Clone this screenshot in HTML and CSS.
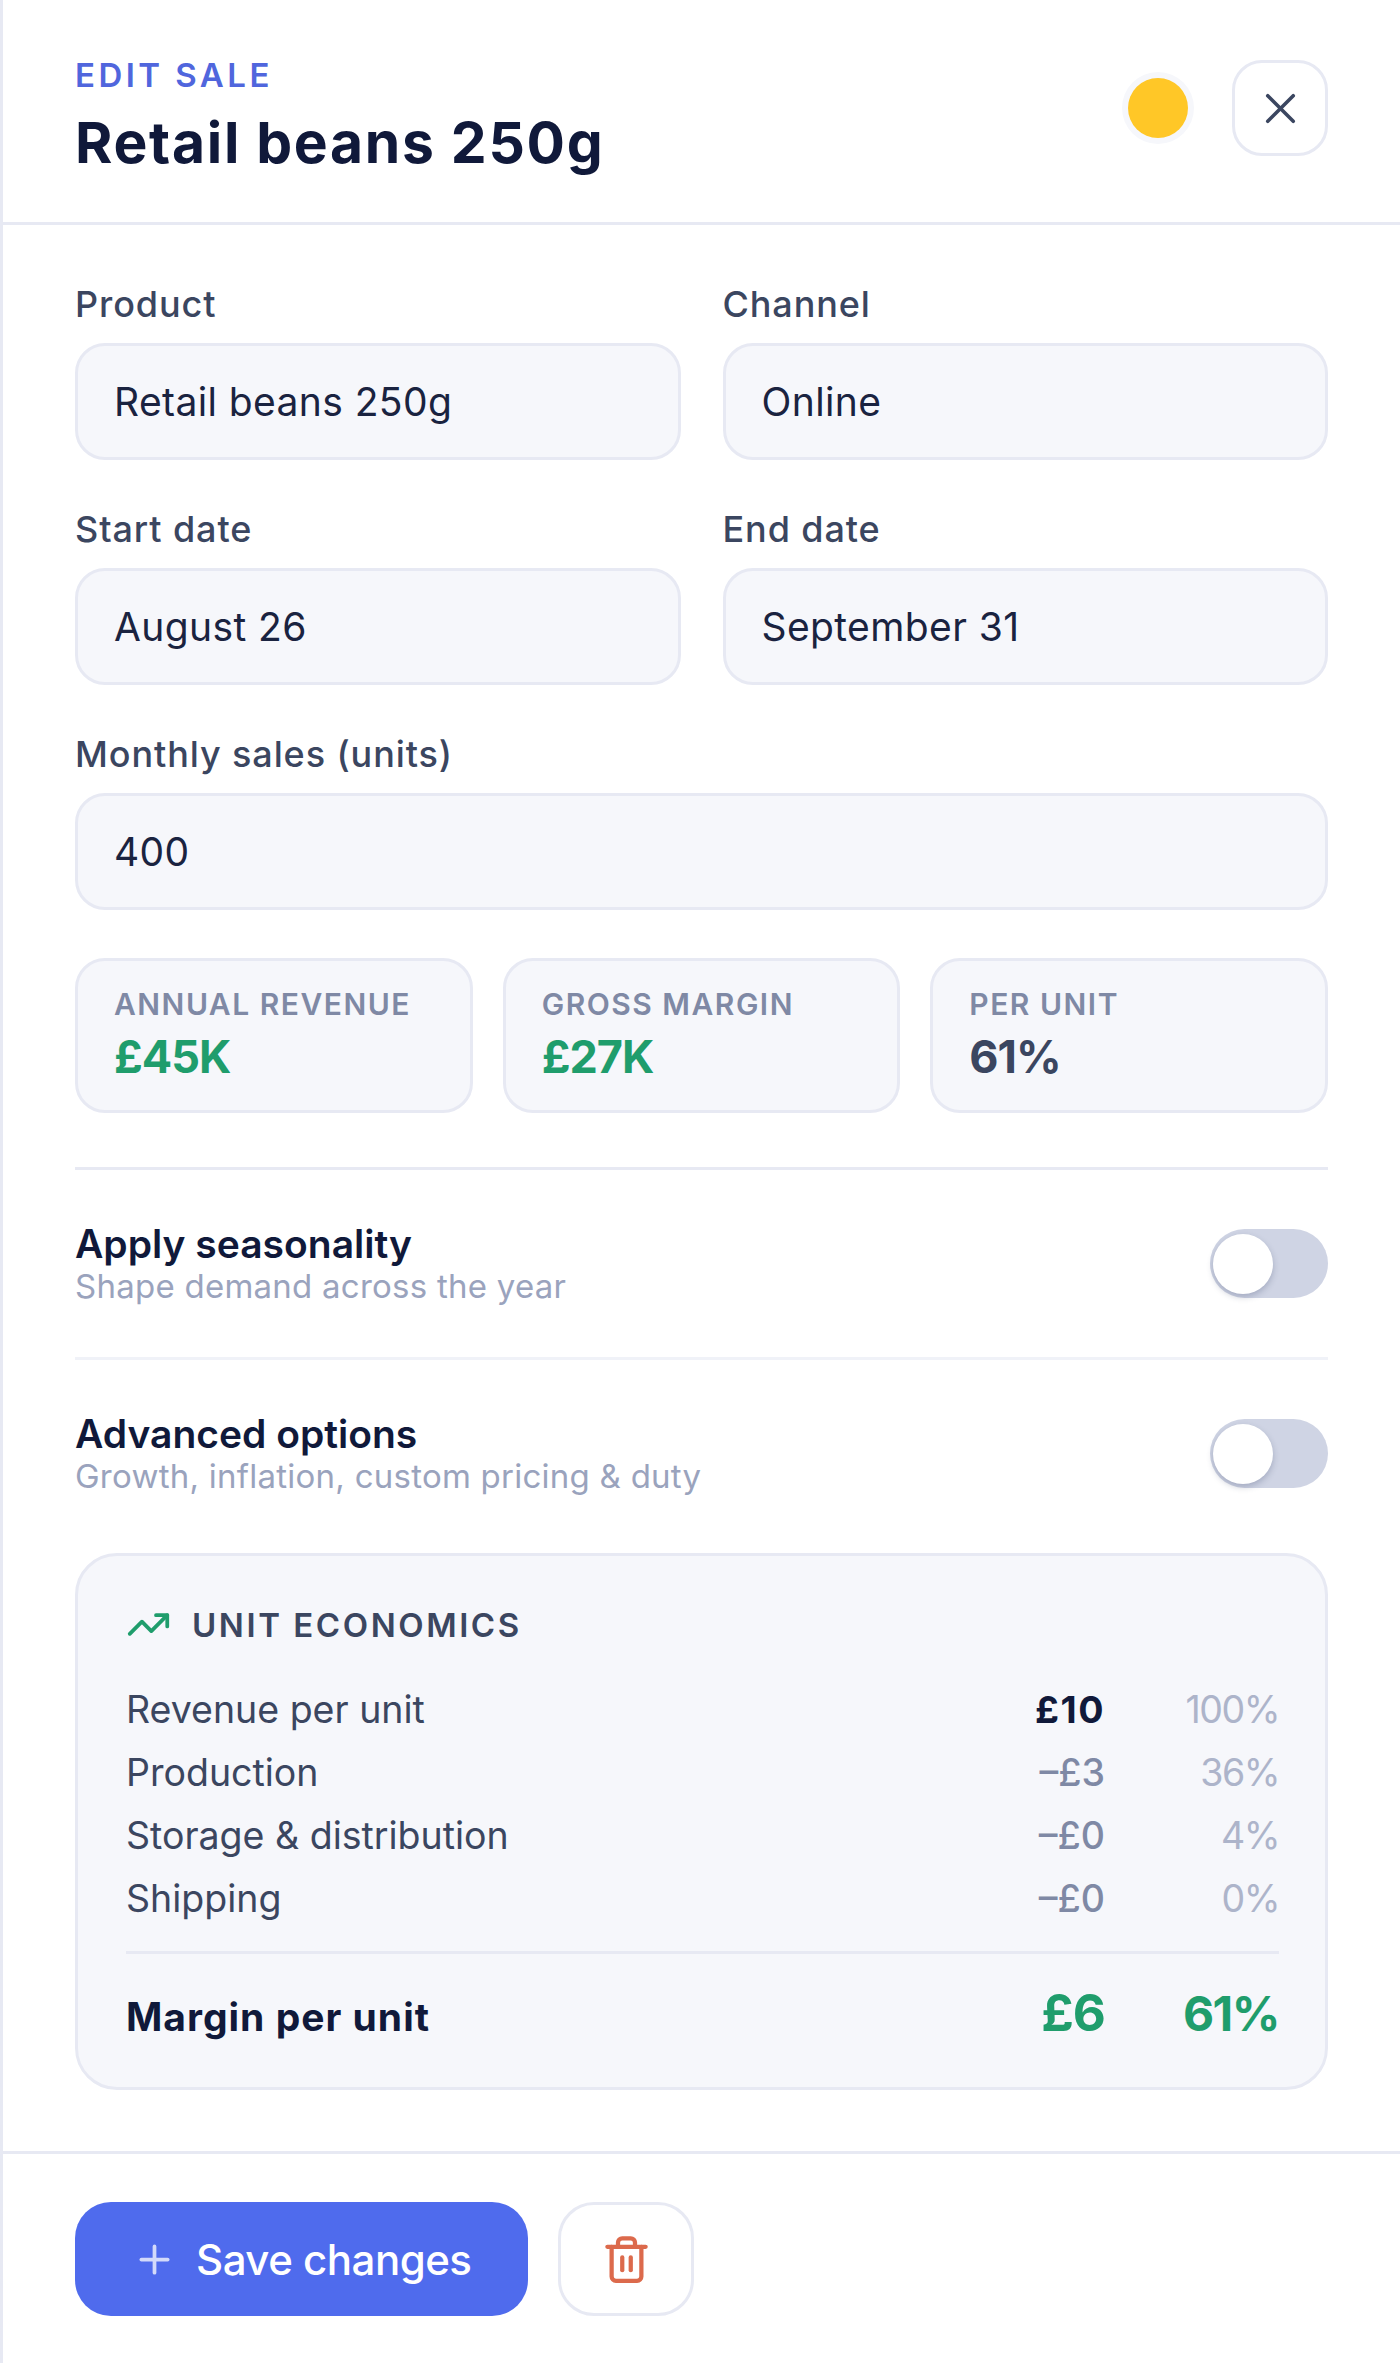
FILE: index.html
```html
<!DOCTYPE html>
<html lang="en">
<head>
    <meta charset="UTF-8">
    <meta name="viewport" content="width=device-width, initial-scale=1.0">
    <title>Edit sale</title>
    <link rel="stylesheet" href="styles.css">
</head>
<body>
    <div class="panel">
        <header class="panel-header">
            <div>
                <div class="eyebrow">EDIT SALE</div>
                <h1 class="title">Retail beans 250g</h1>
            </div>
            <div class="header-actions">
                <span class="colour-dot"></span>
                <button class="icon-button close-button" type="button" aria-label="Close">
                    <svg width="51" height="51" viewBox="0 0 24 24" fill="none" stroke="currentColor" stroke-width="1.7" stroke-linecap="round" stroke-linejoin="round"><path d="M18 6 6 18"/><path d="m6 6 12 12"/></svg>
                </button>
            </div>
        </header>

        <div class="panel-body">
            <div class="field-grid">
                <div class="field">
                    <div class="field-label">Product</div>
                    <div class="field-value">Retail beans 250g</div>
                </div>
                <div class="field">
                    <div class="field-label">Channel</div>
                    <div class="field-value">Online</div>
                </div>
                <div class="field">
                    <div class="field-label">Start date</div>
                    <div class="field-value">August 26</div>
                </div>
                <div class="field">
                    <div class="field-label">End date</div>
                    <div class="field-value">September 31</div>
                </div>
                <div class="field field-wide">
                    <div class="field-label">Monthly sales (units)</div>
                    <div class="field-value">400</div>
                </div>
            </div>

            <div class="stats">
                <div class="stat">
                    <div class="stat-label">ANNUAL REVENUE</div>
                    <div class="stat-value green">£45K</div>
                </div>
                <div class="stat">
                    <div class="stat-label">GROSS MARGIN</div>
                    <div class="stat-value green">£27K</div>
                </div>
                <div class="stat">
                    <div class="stat-label">PER UNIT</div>
                    <div class="stat-value">61%</div>
                </div>
            </div>

            <div class="toggle-row">
                <div>
                    <div class="toggle-title">Apply seasonality</div>
                    <div class="toggle-sub">Shape demand across the year</div>
                </div>
                <div class="toggle"><span class="knob"></span></div>
            </div>
            <div class="toggle-row toggle-row-light">
                <div>
                    <div class="toggle-title">Advanced options</div>
                    <div class="toggle-sub">Growth, inflation, custom pricing &amp; duty</div>
                </div>
                <div class="toggle"><span class="knob"></span></div>
            </div>

            <section class="economics">
                <div class="economics-head">
                    <svg width="45" height="45" viewBox="0 0 24 24" fill="none" stroke="#1f9d6c" stroke-width="2" stroke-linecap="round" stroke-linejoin="round"><path d="M16 7h6v6"/><path d="m22 7-8.5 8.5-5-5L2 17"/></svg>
                    <span>UNIT ECONOMICS</span>
                </div>
                <div class="eco-row">
                    <span class="eco-name">Revenue per unit</span>
                    <span class="eco-amount strong">£10</span>
                    <span class="eco-pct">100%</span>
                </div>
                <div class="eco-row">
                    <span class="eco-name">Production</span>
                    <span class="eco-amount">–£3</span>
                    <span class="eco-pct">36%</span>
                </div>
                <div class="eco-row">
                    <span class="eco-name">Storage &amp; distribution</span>
                    <span class="eco-amount">–£0</span>
                    <span class="eco-pct">4%</span>
                </div>
                <div class="eco-row">
                    <span class="eco-name">Shipping</span>
                    <span class="eco-amount">–£0</span>
                    <span class="eco-pct">0%</span>
                </div>
                <div class="eco-total">
                    <span class="eco-name">Margin per unit</span>
                    <span class="eco-amount">£6</span>
                    <span class="eco-pct">61%</span>
                </div>
            </section>
        </div>

        <footer class="panel-footer">
            <button class="save-button" type="button">
                <svg width="45" height="45" viewBox="0 0 24 24" fill="none" stroke="currentColor" stroke-width="2" stroke-linecap="round" stroke-linejoin="round"><path d="M5 12h14"/><path d="M12 5v14"/></svg>
                <span>Save changes</span>
            </button>
            <button class="icon-button delete-button" type="button" aria-label="Delete">
                <svg width="51" height="51" viewBox="0 0 24 24" fill="none" stroke="currentColor" stroke-width="2" stroke-linecap="round" stroke-linejoin="round"><path d="M3 6h18"/><path d="M19 6v14a2 2 0 0 1-2 2H7a2 2 0 0 1-2-2V6"/><path d="M8 6V4a2 2 0 0 1 2-2h4a2 2 0 0 1 2 2v2"/><path d="M10 11v6"/><path d="M14 11v6"/></svg>
            </button>
        </footer>
    </div>
</body>
</html>
```
FILE: styles.css
```css
:root {
    --line: #e7e9f3;
    --soft: #f6f7fb;
    --ink: #10193a;
    --slate: #3b4660;
    --muted: #7f89a5;
    --faint: #9aa3bd;
    --green: #1f9d6c;
}

* {
    box-sizing: border-box;
}

body {
    margin: 0;
    background: #fff;
    font-family: Inter, "Liberation Sans", sans-serif;
    font-optical-sizing: none;
    color: var(--ink);
}

.panel {
    border-left: 3px solid var(--line);
    height: 2363px;
    overflow: hidden;
}

/* Header */
.panel-header {
    display: flex;
    justify-content: space-between;
    align-items: flex-start;
    height: 225px;
    padding: 54px 72px 0;
    border-bottom: 3px solid var(--line);
}

.eyebrow {
    font-size: 33px;
    line-height: 42px;
    font-weight: 600;
    letter-spacing: 3.45px;
    color: #5066dd;
    margin-bottom: 12px;
}

.title {
    margin: 0;
    font-size: 57px;
    line-height: 69px;
    font-weight: 700;
    letter-spacing: 1.7px;
}

.header-actions {
    display: flex;
    align-items: center;
    gap: 44px;
    margin-top: 6px;
}

.colour-dot {
    width: 60px;
    height: 60px;
    border-radius: 50%;
    background: #ffc727;
    box-shadow: 0 0 0 6px var(--soft);
}

.icon-button {
    display: flex;
    align-items: center;
    justify-content: center;
    padding: 0;
    background: #fff;
    border: 3px solid var(--line);
    border-radius: 30px;
    cursor: pointer;
}

.close-button {
    width: 96px;
    height: 96px;
    color: var(--slate);
}

/* Form */
.panel-body {
    padding: 57px 72px 61px;
}

.field-grid {
    display: grid;
    grid-template-columns: 1fr 1fr;
    column-gap: 42px;
    row-gap: 47px;
}

.field-wide {
    grid-column: 1 / -1;
}

.field-label {
    font-size: 36px;
    line-height: 45px;
    font-weight: 500;
    letter-spacing: 0.9px;
    color: var(--slate);
    margin-bottom: 16px;
}

.field-value {
    height: 117px;
    padding: 0 36px;
    display: flex;
    align-items: center;
    background: var(--soft);
    border: 3px solid var(--line);
    border-radius: 30px;
    font-size: 39px;
    letter-spacing: 0.4px;
    color: #1a2340;
}

/* Stat cards */
.stats {
    display: grid;
    grid-template-columns: repeat(3, 1fr);
    gap: 30px;
    margin-top: 48px;
}

.stat {
    height: 155px;
    padding: 25px 36px;
    background: var(--soft);
    border: 3px solid var(--line);
    border-radius: 30px;
}

.stat-label {
    font-size: 30px;
    line-height: 36px;
    font-weight: 600;
    letter-spacing: 1.5px;
    color: var(--muted);
    margin-bottom: 6px;
}

.stat-value {
    font-size: 45px;
    line-height: 57px;
    font-weight: 700;
    letter-spacing: -1px;
    color: var(--slate);
}

.green {
    color: var(--green);
}

/* Toggles */
.toggle-row {
    display: flex;
    justify-content: space-between;
    align-items: center;
    height: 190px;
    border-top: 3px solid var(--line);
}

.stats + .toggle-row {
    margin-top: 54px;
}

.toggle-row-light {
    border-top-color: #f0f2f8;
}

.toggle-title {
    font-size: 39px;
    line-height: 46px;
    font-weight: 600;
}

.toggle-sub {
    font-size: 33px;
    line-height: 39px;
    letter-spacing: 0.25px;
    color: var(--faint);
}

.toggle {
    display: flex;
    align-items: center;
    width: 118px;
    height: 69px;
    padding-left: 3px;
    background: #cfd4e4;
    border-radius: 35px;
}

.knob {
    width: 60px;
    height: 60px;
    border-radius: 50%;
    background: #fff;
    box-shadow: 0 3px 6px rgba(40, 50, 90, 0.25);
}

/* Unit economics */
.economics {
    margin-top: 6px;
    padding: 46px 46px 37px 48px;
    background: var(--soft);
    border: 3px solid var(--line);
    border-radius: 42px;
}

.economics-head {
    display: flex;
    align-items: center;
    gap: 21px;
    height: 45px;
    margin-bottom: 31px;
    font-size: 33px;
    font-weight: 600;
    letter-spacing: 2.55px;
    color: var(--slate);
}

.eco-row {
    display: flex;
    align-items: center;
    height: 63px;
    font-size: 37.5px;
}

.eco-name {
    flex: 1;
    color: var(--slate);
}

.eco-amount {
    font-weight: 500;
    color: var(--muted);
}

.eco-amount.strong {
    font-weight: 700;
    letter-spacing: 1.5px;
    color: var(--ink);
}

.eco-pct {
    width: 174px;
    text-align: right;
    letter-spacing: -1.5px;
    color: #adb4ca;
}

.eco-total {
    display: flex;
    align-items: baseline;
    margin-top: 21px;
    padding-top: 26px;
    border-top: 3px solid var(--line);
    line-height: 66px;
}

.eco-total .eco-name {
    font-size: 39px;
    font-weight: 700;
    letter-spacing: 1px;
    color: var(--ink);
}

.eco-total .eco-amount {
    font-size: 51px;
    font-weight: 700;
    letter-spacing: -1px;
    color: var(--green);
}

.eco-total .eco-pct {
    font-size: 48px;
    font-weight: 700;
    letter-spacing: -1.5px;
    color: var(--green);
}

/* Footer */
.panel-footer {
    display: flex;
    gap: 30px;
    padding: 48px 72px 0;
    border-top: 3px solid var(--line);
}

.save-button {
    display: flex;
    align-items: center;
    gap: 19px;
    height: 114px;
    padding: 0 57px;
    background: #4f6bed;
    color: #fff;
    border: none;
    border-radius: 36px;
    font-family: inherit;
    font-size: 42px;
    font-weight: 500;
    letter-spacing: -0.5px;
    cursor: pointer;
}

.save-button svg {
    opacity: 0.75;
}

.delete-button {
    width: 136px;
    height: 114px;
    border-radius: 36px;
    color: #dc6a4c;
}
```
